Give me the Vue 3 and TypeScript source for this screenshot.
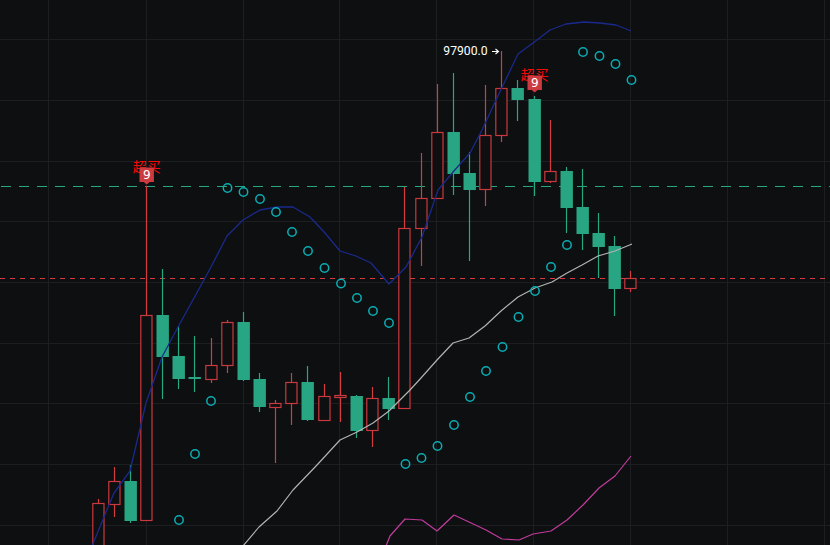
<script setup lang="ts">
type Candle = { up: boolean; high: number; top: number; bottom: number; low: number }

const candleX = (i: number) => Math.round(97.5 + 16.15 * i) + 0.5

const raw: [number, number, number, number, number][] = [
  [1, 499, 503, 560, 560],
  [1, 467, 481, 504, 517],
  [0, 465, 481, 521, 523],
  [1, 186, 315, 520, 520],
  [0, 269, 315, 357, 399],
  [0, 326, 356, 379, 389],
  [0, 336, 377, 379, 392],
  [1, 338, 365, 379, 383],
  [1, 320, 322, 365, 373],
  [0, 312, 322, 380, 381],
  [0, 373, 379, 407, 412],
  [1, 400, 403, 407, 463],
  [1, 373, 382, 403, 425],
  [0, 366, 382, 420, 421],
  [1, 384, 396, 420, 421],
  [1, 372, 395, 397, 422],
  [0, 395, 396, 431, 438],
  [1, 387, 398, 430, 447],
  [0, 377, 398, 409, 420],
  [1, 187, 228, 408, 409],
  [1, 153, 198, 228, 266],
  [1, 84, 132, 198, 199],
  [0, 73, 132, 174, 195],
  [0, 152, 173, 190, 261],
  [1, 85, 135, 189, 206],
  [1, 51, 88, 135, 142],
  [0, 80, 88, 100, 121],
  [0, 96, 99, 182, 196],
  [1, 120, 171, 181, 183],
  [0, 167, 171, 208, 233],
  [0, 169, 207, 234, 250],
  [0, 213, 233, 247, 278],
  [0, 236, 246, 289, 316],
  [1, 271, 278, 288, 292]
]

const candles = raw.map(([u, high, top, bottom, low], i): Candle & { x: number } => ({
  x: candleX(i),
  up: u === 1,
  high,
  top,
  bottom,
  low
}))

const gridY = [39.5, 100.5, 161.5, 221.5, 282.5, 343.5, 403.5, 464.5, 525.5]
const gridX = [48.5, 146.5, 243.5, 339.5, 436.5, 533.5, 630.5, 727.5, 824.5]

const toPoints = (list: number[][]) => list.map((p) => p.join(',')).join(' ')

const blueLine = toPoints([
  [92, 546], [114, 493], [130, 471], [146, 403], [162, 357], [178, 327], [194, 298], [211, 267],
  [227, 236], [243, 220], [260, 210], [277, 207], [293, 207], [310, 217], [325, 233], [340, 251],
  [356, 256], [371, 263], [389, 284], [406, 267], [422, 237], [438, 190], [453, 172], [470, 153],
  [482, 130], [497, 98], [518, 54], [533, 43], [550, 30], [566, 24], [584, 22], [600, 23], [616, 25], [631, 31]
])

const whiteLine = toPoints([
  [243, 546], [259, 527], [277, 511], [293, 490], [317, 465], [340, 440], [357, 432], [373, 423],
  [389, 411], [410, 390], [421, 378], [437, 360], [453, 343], [469, 338], [485, 326], [501, 311],
  [518, 297], [535, 288], [552, 282], [567, 273], [582, 265], [598, 256], [615, 251], [632, 244]
])

const pinkLine = toPoints([
  [386, 546], [390, 536], [405, 519], [422, 520], [437, 531], [454, 515], [469, 522], [486, 530],
  [502, 539], [519, 540], [533, 534], [551, 531], [567, 520], [583, 505], [599, 488], [615, 476], [631, 456]
])

const dots: [number, number][] = [
  [179, 520], [195, 454], [211, 401], [227.5, 188], [243.5, 192], [260, 199], [276, 212], [292, 232],
  [308, 251], [324.5, 268], [341, 283.5], [357, 298], [373, 311], [389, 323], [405.5, 464], [421.5, 458],
  [437.5, 446], [454, 425], [470, 397], [486, 371], [502.5, 347], [518.5, 317], [535, 291], [551, 267],
  [567, 245], [583, 52], [599.5, 56], [615.5, 64], [631.5, 80]
]

const signals = [
  { x: 146.7, top: 167.5, textY: 172 },
  { x: 534.7, top: 75.5, textY: 80 }
]

const badgePath = (x: number, top: number) =>
  `M${x - 7.2} ${top}H${x + 7.2}V${top + 14.5}H${x + 3}L${x} ${top + 17}L${x - 3} ${top + 14.5}H${x - 7.2}Z`
</script>

<template>
  <div class="chart">
    <svg class="plot" width="830" height="545" viewBox="0 0 830 545">
      <g class="grid">
        <line v-for="y in gridY" :key="'h' + y" x1="0" x2="830" :y1="y" :y2="y" />
        <line v-for="x in gridX" :key="'v' + x" y1="0" y2="545" :x1="x" :x2="x" />
      </g>

      <line class="level-green" x1="1" x2="830" y1="186.5" y2="186.5" />
      <line class="level-red" x1="0" x2="830" y1="278.5" y2="278.5" />

      <g v-for="c in candles" :key="c.x" :class="c.up ? 'rise' : 'fall'">
        <line class="wick" :x1="c.x" :x2="c.x" :y1="c.high" :y2="c.top" />
        <line class="wick" :x1="c.x" :x2="c.x" :y1="c.bottom" :y2="c.low" />
        <rect
          class="body"
          :x="c.up ? c.x - 5.7 : c.x - 6"
          :y="c.up ? c.top + 0.5 : c.top"
          :width="c.up ? 11.2 : 12.4"
          :height="c.bottom - c.top"
        />
      </g>

      <polyline class="ma ma-blue" :points="blueLine" />
      <polyline class="ma ma-white" :points="whiteLine" />
      <polyline class="ma ma-pink" :points="pinkLine" />

      <circle v-for="d in dots" :key="d[0]" class="dot" :cx="d[0]" :cy="d[1]" r="4.2" />

      <g v-for="s in signals" :key="s.x">
        <text class="signal-text" :x="s.x" :y="s.textY" text-anchor="middle">超买</text>
        <path class="badge" :d="badgePath(s.x, s.top)" />
        <text class="badge-text" :x="s.x" :y="s.top + 11.5" text-anchor="middle">9</text>
      </g>

      <text class="price" x="443.3" y="54.5">97900.0</text>
      <path class="price-arrow" d="M492 51.5H498M495.5 49L498.5 51.5L495.5 54" />
    </svg>
  </div>
</template>

<style scoped>
.chart {
  width: 830px;
  height: 545px;
  overflow: hidden;
  background: #0d0f11;
}

.plot {
  display: block;
}

.grid line {
  stroke: #1c1e21;
  stroke-width: 1;
}

.level-green {
  stroke: #26a982;
  stroke-width: 1;
  stroke-dasharray: 10 8;
}

.level-red {
  stroke: #d93a40;
  stroke-width: 1;
  stroke-dasharray: 5 5;
}

.wick {
  stroke-width: 1.2;
}

.rise .wick {
  stroke: #d33c40;
}

.fall .wick {
  stroke: #26a982;
}

.rise .body {
  fill: #0d0f11;
  stroke: #c9393e;
  stroke-width: 1.2;
}

.fall .body {
  fill: #28a582;
}

.ma {
  fill: none;
  stroke-linejoin: round;
}

.ma-blue {
  stroke: #1a2a8c;
  stroke-width: 1.3;
}

.ma-white {
  stroke: #b4b4b4;
  stroke-width: 1.15;
}

.ma-pink {
  stroke: #c23b9c;
  stroke-width: 1.2;
}

.dot {
  fill: none;
  stroke: #0aaeb4;
  stroke-width: 1.5;
}

.signal-text {
  fill: #f50a0a;
  font-family: "Noto Sans CJK SC", sans-serif;
  font-size: 14px;
}

.badge {
  fill: #cb3b3f;
}

.badge-text {
  fill: #ffffff;
  font-family: "DejaVu Sans", sans-serif;
  font-size: 12px;
}

.price {
  fill: #ffffff;
  font-family: Roboto, sans-serif;
  font-size: 12.2px;
}

.price-arrow {
  fill: none;
  stroke: #ffffff;
  stroke-width: 1.1;
}
</style>
